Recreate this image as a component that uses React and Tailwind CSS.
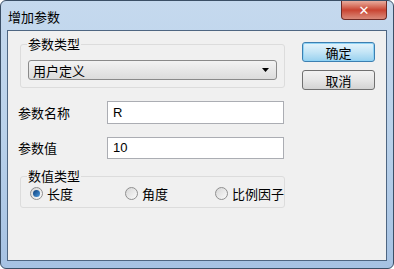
import React from 'react';

const font = { fontFamily: '"Noto Sans CJK SC", "Liberation Sans", sans-serif' };

function Radio({ checked, label, className }) {
  return (
    <div className={`flex items-center gap-[4px] ${className}`}>
      <span className="w-[13px] h-[13px] rounded-full border border-[#8f8f8f] bg-gradient-to-br from-[#d6d6d6] to-[#fbfbfb] flex items-center justify-center">
        {checked && <span className="w-[7px] h-[7px] rounded-full bg-gradient-to-br from-[#0c3f7a] to-[#4c9be0]" />}
      </span>
      <span className="text-[13px] text-black leading-none">{label}</span>
    </div>
  );
}

function Group({ title, className, children }) {
  return (
    <div className={`relative border border-[#dcdcdc] rounded-[3px] ${className}`}>
      <span className="absolute left-[6px] top-[-8px] bg-[#f0f0f0] px-[1px] text-[13px] leading-[13px] text-black">{title}</span>
      {children}
    </div>
  );
}

export default function App() {
  return (
    <div style={font} className="w-[394px] h-[269px] bg-white">
      <div className="w-[394px] h-[269px] rounded-[6px] border border-[#3b4f66] bg-gradient-to-b from-[#c5d9ee] via-[#b9d1ea] to-[#a6c2e3] flex flex-col">
        <div className="h-[29px] flex items-start justify-between pl-[7px]">
          <span className="text-[13px] leading-none text-black mt-[9px]">增加参数</span>
          <div className="w-[46px] h-[19px] mr-[6px] rounded-b-[4px] border border-t-0 border-[#6e2a25] bg-gradient-to-b from-[#e7ab9d] via-[#c94331] to-[#d9897a] flex items-center justify-center">
            <span className="text-white text-[13px] font-bold leading-none" style={{ fontFamily: '"DejaVu Sans", sans-serif' }}>✕</span>
          </div>
        </div>
        <div className="flex-1 mx-[6px] mb-[7px] border border-[#4e6682] bg-[#f0f0f0] flex pl-[12px] pr-[11px]">
          <div className="w-[265px] flex flex-col pt-[13px]">
            <Group title="参数类型" className="h-[44px] pt-[15px] px-[7px]">
              <div className="h-[20px] w-[249px] rounded-[3px] border border-[#8a8a8a] bg-gradient-to-b from-[#f3f3f3] to-[#dcdcdc] flex items-center justify-between pl-[4px] pr-[7px]">
                <span className="text-[13px] leading-none text-black">用户定义</span>
                <svg width="7" height="4" viewBox="0 0 7 4"><path d="M0 0H7L3.5 4Z" fill="#000" /></svg>
              </div>
            </Group>
            <div className="flex items-center mt-[13px] h-[23px] -ml-[2px]">
              <span className="w-[89px] text-[13px] text-black">参数名称</span>
              <div className="w-[177px] h-[23px] border border-[#abadb3] bg-white flex items-center pl-[5px] text-[13px] text-black" style={{ fontFamily: '"Liberation Sans", sans-serif' }}>R</div>
            </div>
            <div className="flex items-center mt-[13px] h-[22px] -ml-[2px]">
              <span className="w-[89px] text-[13px] text-black">参数值</span>
              <div className="w-[177px] h-[22px] border border-[#abadb3] bg-white flex items-center pl-[5px] text-[13px] text-black" style={{ fontFamily: '"Liberation Sans", sans-serif' }}>10</div>
            </div>
            <Group title="数值类型" className="mt-[17px] h-[32px] pl-[9px] pt-[2px] flex items-center">
              <Radio checked label="长度" className="w-[95px]" />
              <Radio label="角度" className="w-[90px]" />
              <Radio label="比例因子" />
            </Group>
          </div>
          <div className="flex flex-col ml-auto pt-[11px] gap-[8px]">
            <button className="w-[73px] h-[20px] rounded-[3px] border border-[#3c7fb1] bg-gradient-to-b from-[#e5f4fc] via-[#c4e5f6] to-[#98d1ef] text-[13px] leading-none text-black shadow-[inset_0_0_0_1px_#8fd3f5]">确定</button>
            <button className="w-[73px] h-[20px] rounded-[3px] border border-[#707070] bg-gradient-to-b from-[#f2f2f2] via-[#e6e6e6] to-[#d3d3d3] text-[13px] leading-none text-black">取消</button>
          </div>
        </div>
      </div>
    </div>
  );
}
